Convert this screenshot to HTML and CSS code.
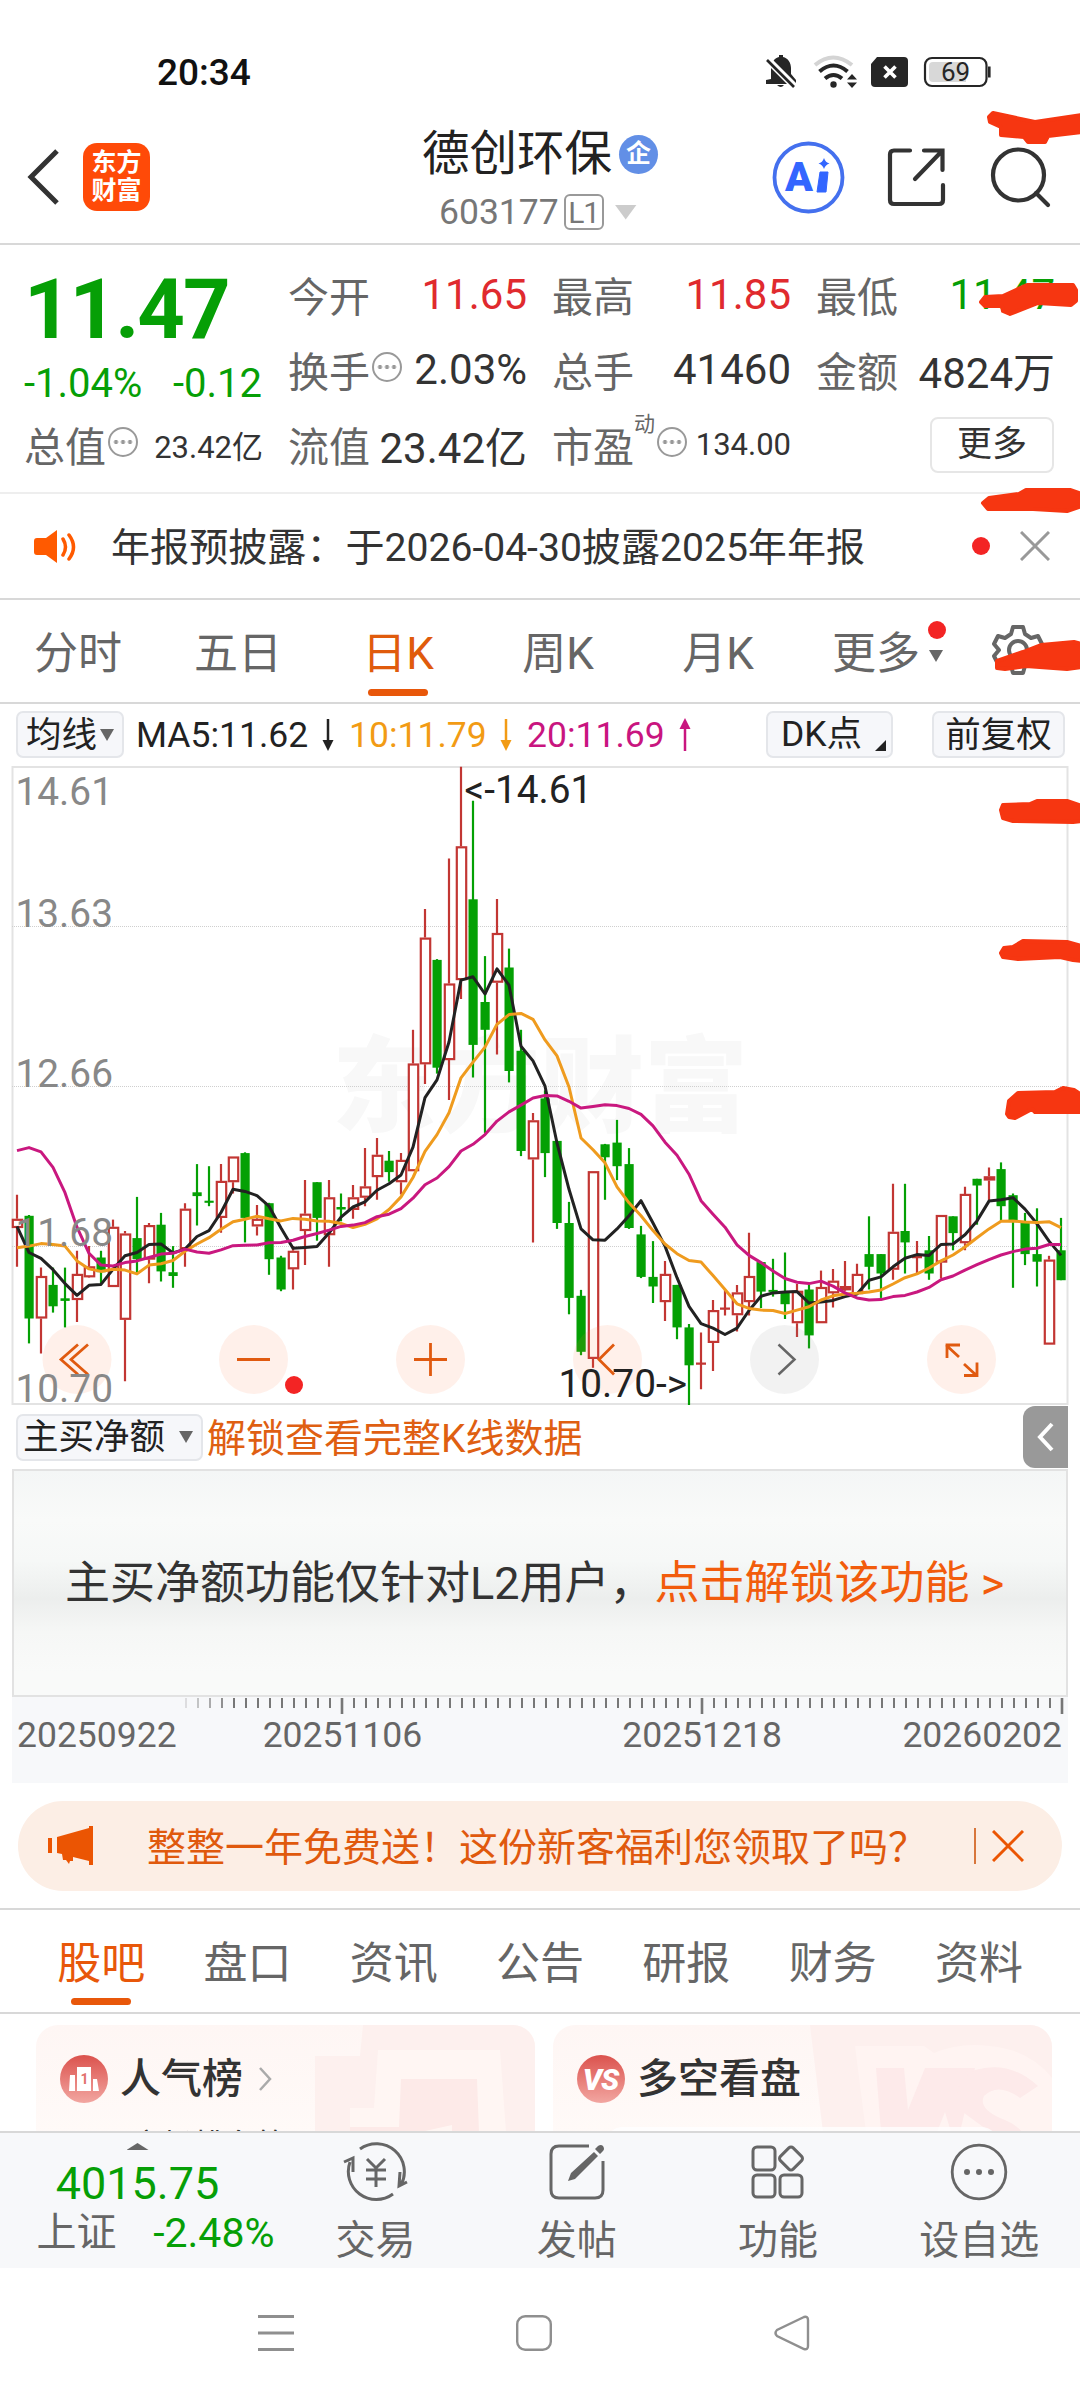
FILE: index.html
```html
<!DOCTYPE html>
<html lang="zh-CN">
<head>
<meta charset="utf-8">
<title>德创环保 603177</title>
<link rel="stylesheet" href="styles.css">
</head>
<body>
<div class="phone">
  <div class="status">
    <span class="clock">20:34</span>
    <svg class="status-icons" width="230" height="40" viewBox="764 52 230 40">
      <g fill="#262626">
        <path d="M771 79V68c0-6 4-10 8-11v-2h4v2c5 1 8 6 8 11v6l5 6v4h-30v-4z"/>
        <path d="M777 85h7q-3 4-7 0z"/>
        <path d="M767 59l28 28" stroke="#fff" stroke-width="7"/>
        <path d="M767 60l27 27" stroke="#262626" stroke-width="2.6"/>
        <circle cx="833.500" cy="84.500" r="3.200"/>
        <path d="M852 74l5 5.500h-10zM852 88l5-5.500h-10z"/>
        <path d="M877 57h27q4 0 4 4v22q0 4-4 4h-29q-4 0-4-4V64z"/>
      </g>
      <g fill="none" stroke-width="4">
        <path d="M815 65q18-15 37 0" stroke="#d4d4d4"/>
        <path d="M819.500 71.500q14-12 28 0M825 78.500q8.500-7 17 0" stroke="#262626"/>
        <path d="M884.500 66.500l11 11M895.500 66.500l-11 11" stroke="#fff" stroke-width="3.600"/>
      </g>
      <rect x="925" y="58" width="61.500" height="28" rx="7" fill="#fff" stroke="#262626" stroke-width="2.200"/>
      <path d="M933 62h33v20h-33q-4 0-4-4V66q0-4 4-4z" fill="#d8d8d8"/>
      <rect x="988" y="66.500" width="2.600" height="11" fill="#262626"/>
      <text class="battery" x="955.500" y="81" text-anchor="middle">69</text>
    </svg>
  </div>

  <header class="top">
    <svg class="back" width="34" height="60" viewBox="0 0 34 60"><path d="M30 4L4 30l26 26" fill="none" stroke="#333" stroke-width="5"/></svg>
    <div class="logo"><span>东方</span><span>财富</span></div>
    <div class="title">
      <div class="name">德创环保<span class="corp">企</span></div>
      <div class="code">603177<span class="lv">L1</span><i class="tri"></i></div>
    </div>
    <svg class="tools" width="290" height="80" viewBox="770 137 290 80" fill="none">
      <circle cx="808.500" cy="177.500" r="34" stroke="#4470ee" stroke-width="3.800"/>
      <text class="ai" x="785" y="191">A</text>
      <path d="M820 172h8l-2 20h-9z" fill="#3366ff" stroke="#3366ff" stroke-linejoin="round"/>
      <path d="M824 158q1.500 4.500 5.500 5.500-4 1-5.500 5.500-1.500-4.500-5.500-5.500 4-1 5.500-5.500z" fill="#3366ff"/>
      <path d="M910 150.500h-16q-4 0-4 4V200q0 4 4 4h45q4 0 4-4v-15M924 150.500h18.500V170M942 151l-27 28" stroke="#333" stroke-width="4.200" stroke-linecap="round"/>
      <circle cx="1018.500" cy="175" r="25.500" stroke="#333" stroke-width="4.200"/>
      <path d="M1036 193l12 12" stroke="#333" stroke-width="4.200" stroke-linecap="round"/>
    </svg>
  </header>

  <section class="quote">
    <div class="col first">
      <div class="price">11.47</div>
      <div class="cell down chg"><span>-1.04%</span><span>-0.12</span></div>
      <div class="cell"><label>总值<i class="more"></i></label><b class="sm">23.42亿</b></div>
    </div>
    <div class="col">
      <div class="cell"><label>今开</label><b class="up">11.65</b></div>
      <div class="cell"><label>换手<i class="more"></i></label><b>2.03%</b></div>
      <div class="cell"><label>流值</label><b>23.42亿</b></div>
    </div>
    <div class="col">
      <div class="cell"><label>最高</label><b class="up">11.85</b></div>
      <div class="cell"><label>总手</label><b>41460</b></div>
      <div class="cell"><label>市盈<sup>动</sup><i class="more"></i></label><b class="sm">134.00</b></div>
    </div>
    <div class="col">
      <div class="cell"><label>最低</label><b class="down">11.47</b></div>
      <div class="cell"><label>金额</label><b>4824万</b></div>
      <div class="cell end"><span class="btn-more">更多</span></div>
    </div>
  </section>

  <section class="notice">
    <svg width="46" height="36" viewBox="0 0 46 36"><path d="M3 10h9L23 2v33l-11-8H3q-3 0-3-3V13q0-3 3-3z" fill="#ff5a00"/><path d="M29 11q5 8 0 16M35 7q9 12 0 24" fill="none" stroke="#ff5a00" stroke-width="3.500" stroke-linecap="round"/></svg>
    <span class="notice-text">年报预披露：于2026-04-30披露2025年年报</span>
    <i class="dot"></i>
    <svg width="30" height="30" viewBox="0 0 30 30"><path d="M1 1l28 28M29 1L1 29" stroke="#999" stroke-width="3"/></svg>
  </section>

  <nav class="periods">
    <span>分时</span><span>五日</span><span class="on">日K</span><span>周K</span><span>月K</span><span class="pm">更多<i class="tri"></i><i class="dot"></i></span>
    <svg class="gear" width="52" height="52" viewBox="-26 -26 52 52" fill="none" stroke="#666" stroke-width="4"><path d="M-5-23H5L7-16 13-12 20-14 24-6 19 0 24 6 20 14 13 12 7 16 5 23H-5L-7 16-13 12-20 14-24 6-19 0-24-6-20-14-13-12-7-16z" stroke-linejoin="round"/><circle r="9"/></svg>
  </nav>

  <div class="ma">
    <span class="chip avg">均线<i class="tri"></i></span>
    <span class="m5">MA5:11.62<svg width="12" height="34" viewBox="0 0 12 34"><path d="M6 1v28" stroke="currentColor" stroke-width="2.500"/><path d="M0.500 22h11L6 33z" fill="currentColor"/></svg></span>
    <span class="m10">10:11.79<svg width="12" height="34" viewBox="0 0 12 34"><path d="M6 1v28" stroke="currentColor" stroke-width="2.500"/><path d="M0.500 22h11L6 33z" fill="currentColor"/></svg></span>
    <span class="m20">20:11.69<svg width="12" height="34" viewBox="0 0 12 34"><path d="M6 33V5" stroke="currentColor" stroke-width="2.500"/><path d="M0.500 11h11L6 0z" fill="currentColor"/></svg></span>
    <span class="chip dk">DK点<i class="corner"></i></span>
    <span class="chip fq">前复权</span>
  </div>

  <div class="chart"><svg id="kline" width="1080" height="640" viewBox="0 765 1080 640"></svg></div>

  <div class="sub">
    <span class="chip flow">主买净额<i class="tri"></i></span>
    <span class="unlock">解锁查看完整K线数据</span>
    <span class="drawer"><svg width="18" height="30" viewBox="0 0 18 30"><path d="M15 2L3 15l12 13" fill="none" stroke="#fff" stroke-width="4"/></svg></span>
  </div>
  <div class="locked"><span>主买净额功能仅针对L2用户，<em>点击解锁该功能 &gt;</em></span></div>
  <div class="axis">
    <svg id="ticks" width="1056" height="18" viewBox="12 1697 1056 18"></svg>
    <div class="dates"><span>20250922</span><span>20251106</span><span>20251218</span><span>20260202</span></div>
  </div>

  <div class="promo">
    <svg width="46" height="40" viewBox="0 0 46 40" fill="#eb5503"><path d="M0 12h4v15H0zM9 11L41 2V0h4v39h-4v-4L25 31v4h-3l-1 3-3-4h-3l-1-6-5-1z"/></svg>
    <span class="promo-text">整整一年免费送！这份新客福利您领取了吗？</span>
    <i class="bar"></i>
    <svg width="32" height="32" viewBox="0 0 32 32"><path d="M1 1l30 30M31 1L1 31" stroke="#eb5503" stroke-width="3"/></svg>
  </div>

  <nav class="tabs"><span class="on">股吧</span><span>盘口</span><span>资讯</span><span>公告</span><span>研报</span><span>财务</span><span>资料</span></nav>

  <section class="cards">
    <div class="card">
      <svg class="deco" width="499" height="107" viewBox="36 2025 499 107"><path d="M363 2025H535V2132H315V2056H360z" fill="#fdf0ee"/><path d="M378 2050H500L506 2132H350V2108H374z" fill="#fff6f3"/><path d="M401 2079H477L479 2132H350V2127H399z" fill="#fdeae8"/><path d="M425 2131L452 2125V2132z" fill="#fff6f3"/></svg>
      <div class="card-head">
        <svg width="48" height="48" viewBox="0 0 48 48"><defs><linearGradient id="rg" x2="0" y2="1"><stop stop-color="#db524d"/><stop offset="1" stop-color="#f2a6a1"/></linearGradient></defs><circle cx="24" cy="24" r="24" fill="url(#rg)"/><path d="M10 20h5v16H9zM17 12h14v24H17zM33 24h4l2 12h-6z" fill="#fff"/><text class="rank" x="20.500" y="29">1</text></svg>
        <h3>人气榜</h3>
        <svg width="14" height="24" viewBox="0 0 14 24"><path d="M2 1l10 11L2 23" fill="none" stroke="#aaa" stroke-width="2.500"/></svg>
      </div>
      <p>市场排名第</p>
    </div>
    <div class="card">
      <svg class="deco" width="499" height="107" viewBox="553 2025 499 107"><path d="M810 2025H1052V2132H823z" fill="#fdf0ee"/><path d="M855 2046H924L934 2053Q960 2042 990 2046Q1030 2050 1052 2078V2132H866z" fill="#fff4f2"/><path d="M876 2068H904L908 2110 925 2068H975L960 2132H951L945 2112 937 2132H881z" fill="#fdeaea"/><path d="M1038 2086Q1010 2060 975 2070 950 2084 960 2110L990 2132H1022Q1016 2124 1000 2118 978 2108 984 2096 998 2082 1020 2098z" fill="#fdeaea"/></svg>
      <div class="card-head">
        <svg width="48" height="48" viewBox="0 0 48 48"><circle cx="24" cy="24" r="24" fill="url(#rg)"/><text class="vs" x="23.500" y="35" text-anchor="middle">VS</text></svg>
        <h3>多空看盘</h3>
      </div>
      <div class="panel"></div>
    </div>
  </section>

  <footer class="bottom">
    <div class="index">
      <i class="tri"></i>
      <div class="pt">4015.75</div>
      <div class="row"><span>上证</span><b>-2.48%</b></div>
    </div>
    <div class="act"><svg width="66" height="60" viewBox="-33 -30 66 60" fill="none" stroke="#666" stroke-width="3"><path d="M-16-23A28 28 0 0 1 25 13M17 22A28 28 0 0 1-26-10M-32-10l9-4v14M31 10l-8 4 1-14"/><path d="M-9-13L0-4 9-13M0-4v19M-10-2h20M-10 7h20"/></svg><span>交易</span></div>
    <div class="act"><svg width="60" height="60" viewBox="-30 -30 60 60"><path d="M12-26h-30q-8 0-8 8v36q0 8 8 8h36q8 0 8-8V-11" fill="none" stroke="#666" stroke-width="3"/><path d="M-9 9l3-8L17-20l4 4L-2 7zM18-23l3-3q3-2 5 0 2 3 0 5l-3 3z" fill="#666"/></svg><span>发帖</span></div>
    <div class="act"><svg width="60" height="60" viewBox="-30 -30 60 60" fill="none" stroke="#666" stroke-width="3"><rect x="-25" y="-25" width="22" height="23" rx="4"/><rect x="-25" y="3" width="22" height="22" rx="4"/><rect x="2" y="3" width="22" height="22" rx="4"/><rect x="4" y="-22.500" width="18" height="18" rx="3" transform="rotate(45 13 -13.500)"/></svg><span>功能</span></div>
    <div class="act"><svg width="60" height="60" viewBox="-30 -30 60 60"><circle r="26.800" fill="none" stroke="#666" stroke-width="2.800"/><g fill="#666"><circle cx="-12" r="3"/><circle r="3"/><circle cx="12" r="3"/></g></svg><span>设自选</span></div>
  </footer>

  <div class="sysnav">
    <svg width="36" height="36" viewBox="0 0 36 36"><path d="M0 1.500h36M0 18h36M0 34.500h36" stroke="#8f8f8f" stroke-width="2.800"/></svg>
    <svg width="36" height="36" viewBox="0 0 36 36"><rect x="1.200" y="1.200" width="33.600" height="33.600" rx="8" fill="none" stroke="#8f8f8f" stroke-width="2.400"/></svg>
    <svg width="36" height="36" viewBox="0 0 36 36"><path d="M30 2L3 15q-3 3 0 6l27 13q4 1 4-3V5q0-4-4-3z" fill="none" stroke="#8f8f8f" stroke-width="2.400"/></svg>
  </div>

  <svg class="marks" width="1080" height="2400" viewBox="0 0 1080 2400">
    <path d="M989 117L993 113 1035 122 1082 115V132L1048 136 1045 142H1028L1024 137 1001 135V127L990 122z"/>
    <path d="M981 302L985 297 1003 296 1027 285H1073L1076 290V301L1071 305 1038 303 1010 314 1003 311 1002 306H985z"/>
    <path d="M983 503L989 498 1019 494 1026 490H1070L1082 494V506L1067 511 1033 509H988z"/>
    <path d="M997 668V661L1023 652 1041 645 1074 642 1082 644V667L1067 669 1026 666 1005 669z"/>
    <path d="M1001 810L1003 805 1030 804 1037 801H1067L1082 806V821L1073 822 1013 821 1003 818z"/>
    <path d="M1001 953L1004 948 1013 947 1023 941 1067 942 1082 946V961L1073 960 1060 957 1018 959 1003 957z"/>
    <path d="M1007 1114L1009 1101 1018 1093 1055 1092 1063 1088 1074 1090 1082 1095V1112H1035L1032 1109 1015 1118 1009 1117z"/>
  </svg>
</div>
<script src="chart.js"></script>
</body>
</html>
```
FILE: styles.css
```css
* { box-sizing: border-box; }
body { margin: 0; background: #fff; font-family: Roboto, "Noto Sans CJK SC", sans-serif; color: #333; }
svg { display: block; flex: none; }
i, em { font-style: normal; }
b { font-weight: 400; }
.phone { position: relative; width: 1080px; height: 2400px; overflow: hidden; display: flex; flex-direction: column; }
.phone > * { flex: none; }
.up { color: #e02a2e; }
.down { color: #069f06; }
.tri { display: inline-block; width: 14px; height: 12px; background: #666; clip-path: polygon(0 0, 100% 0, 50% 100%); }
.dot { width: 18px; height: 18px; border-radius: 50%; background: #f32424; }

.status { height: 110px; padding: 34px 86px 0 157px; display: flex; justify-content: space-between; align-items: center; }
.clock { font-size: 37px; font-weight: 500; color: #111; line-height: 40px; margin-top: 2px; }
.battery { font-size: 26px; fill: #262626; }

.top { height: 135px; border-bottom: 2px solid #d8d8d8; display: flex; align-items: center; padding: 0 20px 0 27px; }
.logo { margin-left: 22px; width: 67px; height: 68px; border-radius: 14px; background: #ff4a08; color: #fff; font-weight: 700; font-size: 25px; line-height: 28px; display: flex; flex-direction: column; justify-content: center; align-items: center; }
.title { margin-left: 272px; width: 300px; margin-top: 15px; }
.name { font-size: 47.500px; line-height: 56px; display: flex; align-items: center; color: #222; }
.corp { margin-left: 7px; width: 39px; height: 39px; border-radius: 50%; background: #628fe6; color: #fff; font-size: 25px; font-weight: 700; line-height: 38px; text-align: center; }
.code { padding-left: 17px; font-size: 35.500px; line-height: 60px; color: #777; display: flex; align-items: center; }
.lv { margin-left: 5px; width: 40px; height: 36px; border: 2px solid #999; border-radius: 6px; font-size: 30px; line-height: 34px; text-align: center; letter-spacing: -1px; }
.code .tri { margin-left: 11px; width: 22px; height: 15px; background: #ccc; }
.tools { margin-left: auto; }
.ai { font-size: 41px; font-weight: 900; fill: #3366ff; }

.quote { height: 249px; border-bottom: 2px solid #eee; padding: 12px 26px 0 24px; display: grid; grid-template-columns: repeat(4, 238px); column-gap: 26px; }
.col { display: flex; flex-direction: column; }
.cell { height: 75px; display: flex; align-items: center; justify-content: space-between; font-size: 42px; white-space: nowrap; }
.cell label { color: #666; font-size: 41px; display: flex; align-items: center; margin-top: -2px; }
.cell b { margin-right: -1px; }
.cell .sm { font-size: 31px; }
.first .price { height: 99px; line-height: 106px; font-size: 83px; font-weight: 700; color: #069f06; letter-spacing: -2px; }
.first .chg { height: 54px; font-size: 40px; margin-bottom: -3px; }
.more { width: 30px; height: 30px; border-radius: 50%; border: 2px solid #999; margin: 0 0 3px 2px; background: radial-gradient(circle, #999 1.800px, transparent 2.300px) center / 7px 26px repeat-x; background-clip: content-box; padding: 0 3px; }
.cell sup { font-size: 21px; line-height: 24px; align-self: flex-start; margin-top: -2px; }
.cell.end { justify-content: flex-end; }
.btn-more { width: 124px; height: 56px; border: 2px solid #e6e6e6; border-radius: 8px; font-size: 35px; line-height: 52px; text-align: center; }

.notice { height: 106px; border-bottom: 2px solid #d8d8d8; padding: 0 30px 0 34px; display: flex; align-items: center; }
.notice-text { margin: -4px 0 0 31px; font-size: 39.100px; flex: 1; }
.notice .dot { margin-right: 30px; }

.periods { height: 104px; border-bottom: 2px solid #d8d8d8; display: flex; align-items: center; font-size: 44px; color: #666; padding-top: 6px; }
.periods span { width: 160px; text-align: center; position: relative; left: -2px; line-height: 60px; }
.periods .on { color: #e05b0c; }
.periods .on::after, .tabs .on::after { content: ""; position: absolute; left: 50px; bottom: -12px; width: 60px; height: 7px; border-radius: 4px; background: #e8570a; }
.periods .pm { width: 192px; text-align: left; padding-left: 34px; }
.pm .tri { margin-left: 9px; vertical-align: 7px; }
.pm .dot { position: absolute; left: 130px; top: -3px; }
.gear { margin-top: -8px; }

.ma { height: 61px; padding-left: 16px; display: flex; align-items: center; font-size: 35.500px; }
.chip { height: 47px; border: 2px solid #e4e6ea; border-radius: 7px; background: #f6f7fa; color: #222; font-size: 35.500px; line-height: 44px; white-space: nowrap; }
.avg { width: 108px; padding-left: 8px; }
.avg .tri { vertical-align: 6px; margin-left: 3px; }
.m5, .m10, .m20 { display: flex; align-items: center; justify-content: space-between; }
.m5 { color: #222; margin-left: 12px; width: 198px; }
.m10 { color: #f29b14; margin-left: 15px; width: 163px; }
.m20 { color: #c9157f; margin-left: 15px; width: 164px; }
.dk { margin-left: 75px; width: 127px; padding: 0 5px 0 13px; display: flex; justify-content: space-between; align-items: flex-end; }
.corner { width: 11px; height: 11px; background: #222; clip-path: polygon(100% 0, 100% 100%, 0 100%); margin-bottom: 5px; }
.fq { margin-left: 39px; width: 133px; text-align: center; }

.chart { height: 640px; }
.price-label { font-size: 38.800px; fill: #888; }
.extreme { font-size: 38.800px; fill: #222; }
.watermark { font-size: 104px; font-weight: 900; fill: #f8f8f8; }

.sub { height: 64px; padding-left: 16px; display: flex; align-items: center; }
.flow { width: 187px; padding-left: 5px; display: flex; align-items: center; }
.flow .tri { margin-left: 14px; }
.unlock { margin: -4px 0 0 4px; font-size: 39px; color: #df5f12; flex: 1; }
.drawer { width: 45px; height: 62px; margin-right: 12px; background: #999; border-radius: 12px 0 0 12px; display: flex; align-items: center; justify-content: center; }
.locked { margin: 0 12px; height: 228px; border: 2px solid #e2e2e2; background: linear-gradient(#f4f6f6, #f9faf9 22%, #f6f8f7 40%, #eceeed 57%, #f6f7f6 72%, #f9faf9 90%); padding-left: 51px; font-size: 45px; line-height: 225px; white-space: nowrap; }
.locked em { color: #f25c0c; }
.axis { margin: 0 12px; height: 86px; background: #f7f8fa; }
.dates { padding: 0 6px 0 5px; font-size: 35.500px; line-height: 40px; color: #666; display: flex; }
.dates span:nth-child(2) { margin-left: 86px; }
.dates span:nth-child(3) { margin-left: 200px; }
.dates span:nth-child(4) { margin-left: auto; }

.promo { margin: 18px 18px 17px; height: 90px; border-radius: 45px; background: #fceee5; padding: 0 38px 0 30px; display: flex; align-items: center; color: #e0590d; font-size: 39px; }
.promo-text { margin: -5px 0 0 53px; flex: 1; white-space: nowrap; }
.bar { width: 2px; height: 36px; background: #d8763c; margin-right: 16px; }

.tabs { height: 106px; border-top: 2px solid #d8d8d8; border-bottom: 2px solid #d8d8d8; padding: 6px 0 0 28px; display: flex; align-items: center; font-size: 44px; color: #666; }
.tabs span { width: 146.300px; text-align: center; position: relative; line-height: 60px; }
.tabs .on { color: #e8570a; }
.tabs .on::after { left: 43px; bottom: -11px; }

.cards { height: 117px; padding: 11px 28px 0 36px; display: grid; grid-template-columns: 499px 499px; column-gap: 18px; overflow: hidden; }
.card { height: 160px; border-radius: 22px; background: linear-gradient(#fef6f4, #fffaf8 110px); position: relative; overflow: hidden; padding: 30px 0 0 24px; }
.deco { position: absolute; left: 0; top: 0; }
.card-head { display: flex; align-items: center; height: 48px; position: relative; }
.card h3 { margin: 0 15px 0 12px; font-size: 41px; font-weight: 500; line-height: 52px; }
.card p { margin: 23px 0 0 72px; font-size: 31px; line-height: 40px; position: relative; }
.panel { position: relative; margin: 24px 0 0 28px; width: 394px; height: 60px; border-radius: 18px; border-top: 4px solid #fff; opacity: 0.8; }
.rank { font-size: 14px; font-weight: 700; fill: #e2716c; }
.vs { font-size: 30px; font-weight: 900; font-style: italic; fill: #fff; letter-spacing: -1px; }

.bottom { height: 137px; background: #f7f8fa; border-top: 2px solid #d8d8d8; display: grid; grid-template-columns: 275px repeat(4, 201.200px); color: #666; font-size: 40px; }
.index { display: flex; flex-direction: column; align-items: center; padding-top: 10px; }
.index .tri { width: 22px; height: 7px; clip-path: polygon(50% 0, 100% 100%, 0 100%); }
.pt { font-size: 45px; line-height: 48px; color: #069f06; margin-top: 10px; }
.row { width: 238px; margin-left: 36px; display: flex; justify-content: space-between; align-items: center; line-height: 50px; }
.row b { color: #069f06; font-size: 41px; }
.act { display: flex; flex-direction: column; align-items: center; padding-top: 9px; }
.act span { line-height: 50px; margin-top: 14px; }
.sysnav { height: 132px; display: flex; justify-content: space-between; padding: 47px 270px 0 258px; }

.marks { position: absolute; left: 0; top: 0; fill: #f63611; stroke: #f63611; stroke-width: 4px; stroke-linejoin: round; pointer-events: none; }
```
FILE: chart.js
```js
// Each candle: direction (r = up, g = down), high, low, body top, body bottom, in plot units.
const candles = `r1033,1204,1090,1112 g1081,1386,1083,1327 r1206,1410,1226,1327 g1206,1313,1247,1298 g1206,1348,1279,1285
r1166,1335,1221,1283 r1155,1230,1203,1229 g1166,1245,1182,1217 r1092,1252,1109,1252 r1119,1476,1125,1330
g1038,1220,1136,1186 r1100,1243,1105,1187 g1076,1239,1104,1215 g1155,1254,1217,1226 r1053,1204,1066,1162
g960,1106,1027,1036 g965,1060,1047,1052 r960,1123,1000,1088 r942,1030,942,1003 g932,1146,934,1088
r1057,1130,1090,1108 g1052,1223,1053,1186 g1178,1262,1182,1258 r1155,1258,1166,1210 r998,1200,1078,1119
g1003,1142,1003,1088 r998,1204,1039,1129 g1030,1096,1062,1068 r1010,1090,1039,1069 r922,1060,1013,1040
r898,1045,938,991 g929,1002,952,979 r934,1032,950,1003 r641,977,721,977 r354,770,422,723
g473,745,475,731 r234,808,531,713 r16,568,205,523 g97,754,331,677 g466,886,575,641
r330,700,411,529 g448,766,493,739 g641,941,691,929 r839,1146,856,949 g785,991,804,934
g905,1114,905,1100 g1050,1317,1100,1278 g1259,1414,1273,1406 r977,1444,977,1423 g912,1045,913,944
g855,998,909,965 g922,1114,960,1112 g1107,1231,1127,1228 g1143,1290,1228,1251 r1190,1333,1221,1288
g1247,1376,1247,1348 g1340,1535,1348,1438 r1360,1495,1432,1436 r1283,1452,1307,1385 r1258,1320,1302,1305
r1247,1358,1265,1319 r1123,1320,1226,1288 g1193,1302,1193,1263 g1185,1275,1259,1263 g1170,1328,1263,1293
r1245,1371,1261,1338 g1247,1398,1258,1367 r1213,1338,1252,1338 r1209,1301,1237,1267 r1190,1262,1250,1260
r1197,1270,1221,1269 g1084,1258,1174,1204 g1174,1278,1174,1220 r1007,1235,1121,1211 g1007,1220,1119,1146
r1143,1222,1180,1182 g1131,1235,1165,1220 r1081,1232,1081,1194 g1084,1165,1084,1124 r1014,1165,1031,1148
g995,1104,995,1011 r968,1046,989,999 g956,1096,972,1060 g1030,1254,1034,1098 g1076,1200,1098,1174
g1065,1251,1174,1192 r1178,1389,1187,1389 g1088,1236,1165,1236`.split(/\s+/);

const averages = {
  '#222222': [1108,1170,1184,1211,1244,1272,1248,1246,1210,1178,1170,1151,1150,1171,1162,1132,1118,1075,1020,1025,1035,1060,1112,1160,1158,1156,1124,1086,1062,1050,1022,1007,986,920,802,760,670,523,515,556,496,535,680,715,775,910,1020,1114,1140,1141,1114,1083,1047,1100,1155,1230,1298,1339,1350,1365,1350,1308,1274,1266,1264,1263,1290,1288,1284,1275,1269,1236,1228,1204,1184,1175,1177,1151,1150,1128,1095,1048,1045,1040,1067,1102,1143,1177],
  '#ef9b1e': [1159,1155,1149,1151,1155,1190,1209,1215,1210,1212,1221,1200,1197,1189,1167,1150,1135,1115,1097,1091,1084,1090,1095,1089,1091,1095,1096,1101,1111,1103,1090,1068,1038,992,930,890,838,755,718,682,628,605,602,616,665,703,777,898,926,957,1014,1052,1083,1118,1150,1173,1189,1193,1225,1258,1292,1303,1307,1308,1315,1307,1299,1283,1273,1269,1267,1264,1259,1245,1230,1221,1207,1190,1176,1157,1135,1114,1096,1095,1098,1099,1097,1111],
  '#c9187f': [928,921,931,968,1028,1110,1172,1200,1202,1194,1190,1182,1174,1172,1162,1169,1172,1164,1154,1153,1152,1147,1146,1141,1132,1125,1117,1108,1105,1099,1085,1079,1066,1041,1009,993,966,929,913,890,858,836,820,803,797,798,811,827,823,819,821,828,842,869,908,939,984,1047,1079,1110,1152,1177,1194,1214,1232,1241,1244,1238,1250,1266,1278,1283,1282,1275,1272,1264,1253,1235,1226,1212,1199,1187,1176,1168,1162,1160,1151,1151]
};

const x = i => 17 + i * 12;
const y = v => +(760 + v * 0.4209).toFixed(1);
let out = '<text class="watermark" x="332" y="1124">东方财富</text>';
out += '<rect x="12.500" y="767" width="1055" height="637" fill="none" stroke="#e3e3e3" stroke-width="2"/>';
for (const g of [926.5, 1086.5, 1246.5]) {
  out += `<path d="M12 ${g}H1067" stroke="#cfcfcf" stroke-dasharray="1 1"/>`;
}
candles.forEach((c, i) => {
  const [hi, lo, top, bot] = c.slice(1).split(',').map(v => y(+v));
  const cx = x(i);
  if (c[0] === 'g') {
    out += `<path d="M${cx} ${hi}V${lo}" stroke="#04a004" stroke-width="2.200"/><rect x="${cx - 4.5}" y="${top}" width="9.200" height="${Math.max(2, bot - top)}" fill="#04a004"/>`;
  } else if (bot - top < 3) {
    out += `<path d="M${cx} ${hi}V${lo}M${cx - 5} ${(top + bot) / 2}h10" stroke="#c23633" stroke-width="2.200"/>`;
  } else {
    out += `<path d="M${cx} ${hi}V${top}M${cx} ${bot}V${lo}" stroke="#c23633" stroke-width="2.200"/><rect x="${cx - 4.2}" y="${top + 1}" width="9.400" height="${bot - top - 2}" fill="#fff" stroke="#c23633" stroke-width="2.200"/>`;
  }
});
for (const [color, vals] of Object.entries(averages)) {
  out += `<polyline fill="none" stroke="${color}" stroke-width="3" stroke-linejoin="round" points="${vals.map((v, i) => x(i) + ',' + y(v)).join(' ')}"/>`;
}
[77, 253.5, 430.5, 607.5, 784.5, 961.5].forEach((cx, i) => {
  out += `<circle cx="${cx}" cy="1359.500" r="34.500" fill="${i === 4 ? '#888' : '#ff7a3c'}" fill-opacity="0.11"/>`;
});
out += '<g fill="none" stroke="#e05a10" stroke-width="2.800"><path d="M78 1344.500l-17 15 17 15M88 1344.500l-17 15 17 15"/><path d="M237 1359.500h33M414 1359.500h33M430.500 1343v33"/><path d="M614 1344.500l-15 15 15 15"/><path d="M947 1358v-13h13M946 1345l13 12M964 1375.500h13v-13M976 1375l-12-11"/></g>';
out += '<path d="M778.500 1344.500l16 15-16 15" fill="none" stroke="#666" stroke-width="2.500"/>';
out += '<circle cx="294" cy="1385" r="9" fill="#f32424"/>';
[['14.61', 805], ['13.63', 927], ['12.66', 1087], ['11.68', 1246], ['10.70', 1402]].forEach(([t, ty]) => {
  out += `<text class="price-label" x="15.500" y="${ty}">${t}</text>`;
});
out += '<text class="extreme" x="464.500" y="803">&lt;-14.61</text><text class="extreme" x="558.500" y="1397">10.70-&gt;</text>';
document.getElementById('kline').innerHTML = out;

let ticks = '';
for (let tx = 186; tx <= 1062; tx += 12) {
  const major = (tx - 342) % 360 === 0;
  const alpha = Math.min(1, (tx - 174) / 60);
  ticks += `<path d="M${tx} 1698V${major ? 1714 : 1708}" stroke="#777" stroke-width="${major ? 2.6 : 2}" opacity="${alpha}"/>`;
}
document.getElementById('ticks').innerHTML = ticks;
```
